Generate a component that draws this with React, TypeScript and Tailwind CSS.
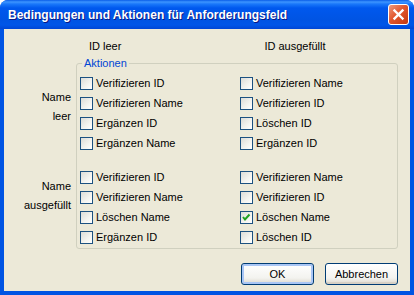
import React from "react";

type Item = { label: string; checked?: boolean };

const groups: { name: string[]; left: Item[]; right: Item[] }[] = [
  {
    name: ["Name", "leer"],
    left: [
      { label: "Verifizieren ID" },
      { label: "Verifizieren Name" },
      { label: "Ergänzen ID" },
      { label: "Ergänzen Name" },
    ],
    right: [
      { label: "Verifizieren Name" },
      { label: "Verifizieren ID" },
      { label: "Löschen ID" },
      { label: "Ergänzen ID" },
    ],
  },
  {
    name: ["Name", "ausgefüllt"],
    left: [
      { label: "Verifizieren ID" },
      { label: "Verifizieren Name" },
      { label: "Löschen Name" },
      { label: "Ergänzen ID" },
    ],
    right: [
      { label: "Verifizieren Name" },
      { label: "Verifizieren ID" },
      { label: "Löschen Name", checked: true },
      { label: "Löschen ID" },
    ],
  },
];

function Check({ label, checked }: Item) {
  return (
    <label className="flex h-[20px] items-start gap-[3px]">
      <span className="mt-[3px] flex h-[13px] w-[13px] shrink-0 items-center justify-center border border-[#1c5180] bg-[linear-gradient(135deg,#dcdcd7_0%,#f4f4f0_60%,#ffffff_100%)]">
        {checked && (
          <svg width="11" height="11" viewBox="0 0 11 11">
            <polyline points="2,5 4,7.5 8.5,2.5" fill="none" stroke="#21a121" strokeWidth="2" />
          </svg>
        )}
      </span>
      <span className="mt-[3px] leading-[13px]">{label}</span>
    </label>
  );
}

function Button({ children, primary }: { children: React.ReactNode; primary?: boolean }) {
  return (
    <button
      className={`h-[22px] w-[73px] rounded-[3px] border border-[#003c74] bg-[linear-gradient(#ffffff,#f3f3ef_70%,#dcd8cc)] text-[11px] leading-[13px] text-black ${
        primary ? "shadow-[inset_0_0_0_2px_#a9c6f5]" : "shadow-[inset_0_-2px_0_#d6d0c5]"
      }`}
    >
      {children}
    </button>
  );
}

export default function App() {
  return (
    <div className="flex h-[295px] w-[414px] flex-col rounded-t-[8px] bg-[#0054e3] [font-family:'Liberation_Sans',Arial,sans-serif]">
      <div className="flex h-[29px] shrink-0 items-center justify-between rounded-t-[8px] bg-[linear-gradient(#0a5de8_0px,#3d95ff_2px,#1a78fa_4px,#0058ee_8px,#0054e3_20px,#0056e8_25px,#0046d5_29px)] pl-[8px] pr-[5px]">
        <span className="text-[12px] font-bold text-white [text-shadow:1px_1px_#0a1883]">
          Bedingungen und Aktionen für Anforderungsfeld
        </span>
        <span className="flex h-[21px] w-[21px] items-center justify-center rounded-[3px] border border-white bg-[linear-gradient(135deg,#ec9a7f,#e2572e_45%,#c4380e)]">
          <svg width="13" height="13" viewBox="0 0 13 13">
            <path d="M2.5 2.5 L10.5 10.5 M10.5 2.5 L2.5 10.5" stroke="#fff" strokeWidth="2.4" strokeLinecap="square" />
          </svg>
        </span>
      </div>

      <div className="mx-[4px] mb-[4px] flex flex-1 flex-col bg-[#ece9d8] text-[11px] text-black">
        <div className="mt-[11px] flex h-[13px] leading-[13px]">
          <span className="ml-[85px]">ID leer</span>
          <span className="ml-[143px]">ID ausgefüllt</span>
        </div>

        <div className="mt-[4px] flex">
          <div className="w-[72px] pr-[5px] text-right leading-[19px]">
            <div className="pt-[31px]">
              <div>{groups[0].name[0]}</div>
              <div>{groups[0].name[1]}</div>
            </div>
            <div className="pt-[51px]">
              <div>{groups[1].name[0]}</div>
              <div>{groups[1].name[1]}</div>
            </div>
          </div>

          <fieldset className="w-[322px] rounded-[3px] border border-[#d0d0bf] pl-[3px] pb-0">
            <legend className="ml-[2px] px-[2px] leading-[13px] text-[#0046d5]">Aktionen</legend>
            <div className="mt-[4px] flex flex-col gap-[14px]">
              {groups.map((g, i) => (
                <div key={i} className="grid grid-cols-[160px_1fr]">
                  <div>
                    {g.left.map((it, j) => (
                      <Check key={j} {...it} />
                    ))}
                  </div>
                  <div>
                    {g.right.map((it, j) => (
                      <Check key={j} {...it} />
                    ))}
                  </div>
                </div>
              ))}
            </div>
          </fieldset>
        </div>

        <div className="mt-[14px] flex justify-end gap-[11px] pr-[12px]">
          <Button primary>OK</Button>
          <Button>Abbrechen</Button>
        </div>
      </div>
    </div>
  );
}
